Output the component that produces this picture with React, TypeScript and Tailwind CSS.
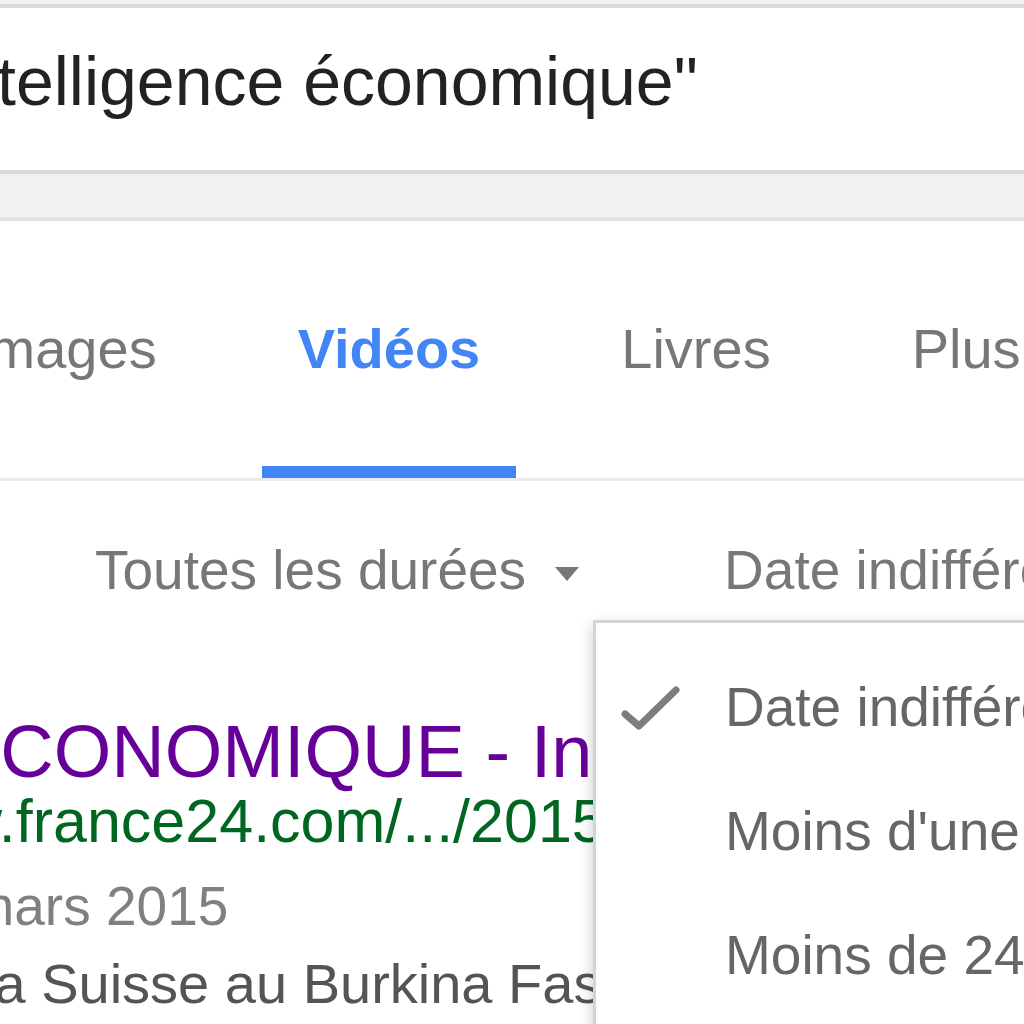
import React from "react";

const tabs = [
  { label: "Images", active: false },
  { label: "Vidéos", active: true },
  { label: "Livres", active: false },
  { label: "Plus", active: false },
];

const dateOptions = ["Date indifférente", "Moins d'une heure", "Moins de 24 heures"];

function Check() {
  return (
    <svg width="60" height="50" viewBox="0 0 60 50" className="absolute left-[24px] top-[59px]">
      <polyline
        points="5,32 19,44 56,8"
        fill="none"
        stroke="#666"
        strokeWidth="7"
        strokeLinecap="round"
        strokeLinejoin="round"
        opacity="0.85"
      />
    </svg>
  );
}

export default function App() {
  return (
    <div
      className="relative w-[1024px] h-[1024px] overflow-hidden bg-white"
      style={{ fontFamily: '"Liberation Sans", Arial, sans-serif' }}
    >
      {/* search box */}
      <div className="h-[4px] bg-[#f2f2f2]" />
      <div className="h-[170px] border-y-4 border-[#d9d9d9] bg-white pt-[39px]">
        <div className="ml-[-3px] whitespace-nowrap text-[68px] leading-none text-[#222]">
          telligence économique"
        </div>
      </div>
      <div className="h-[47px] border-b-4 border-[#e2e2e2] bg-[#f1f1f1]" />

      {/* tabs */}
      <div className="flex gap-[69px] ml-[-63px] border-b-[3px] border-[#ebebeb] whitespace-nowrap">
        {tabs.map((t) => (
          <div key={t.label} className="flex flex-col">
            <div
              className={
                "px-[36px] pt-[100px] text-[56px] leading-none " +
                (t.active ? "font-bold text-[#4285f4]" : "text-[#777]")
              }
            >
              {t.label}
            </div>
            <div className={"mt-[89px] h-[12px] " + (t.active ? "bg-[#4285f4]" : "bg-transparent")} />
          </div>
        ))}
      </div>

      {/* filters */}
      <div className="flex items-center pt-[62px] pl-[95px] whitespace-nowrap text-[55px] leading-none text-[#777]">
        <span>Toutes les durées</span>
        <span className="ml-[29px] mt-[6px] w-0 h-0 border-l-[12px] border-r-[12px] border-t-[14px] border-l-transparent border-r-transparent border-t-[#777]" />
        <span className="ml-[145px]">Date indifférente</span>
      </div>

      {/* result */}
      <div className="mt-[117px] whitespace-nowrap">
        <div className="ml-[-49px] text-[74px] leading-none text-[#660099]">
          ÉCONOMIQUE - Intelligence économique
        </div>
        <div className="ml-[-130px] mt-[2px] text-[61px] leading-none text-[#006621]">
          www.france24.com/.../2015/...
        </div>
        <div className="ml-[-108px] mt-[27px] text-[55px] leading-none text-[#808080]">
          12 mars 2015
        </div>
        <div className="ml-[-18px] mt-[22px] text-[56px] leading-none text-[#545454]">
          la Suisse au Burkina Faso
        </div>
      </div>

      {/* date dropdown menu */}
      <div className="absolute left-[593px] top-[620px] w-[520px] h-[520px] bg-white border-[3px] border-[#d4d4d4] shadow-[0_6px_14px_rgba(0,0,0,0.22)]">
        {dateOptions.map((o, i) => (
          <div key={o} className="relative h-[124px] pt-[57px] pl-[129px] whitespace-nowrap text-[55px] leading-none text-[#666]">
            {i === 0 && <Check />}
            {o}
          </div>
        ))}
      </div>
    </div>
  );
}
